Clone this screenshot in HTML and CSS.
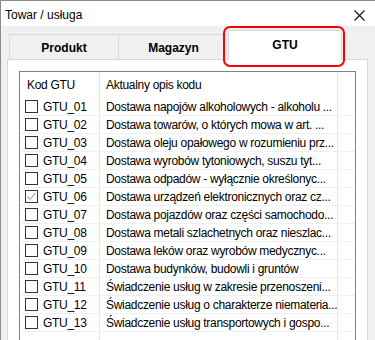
FILE: index.html
```
<!DOCTYPE html>
<html lang="pl">
<head>
    <meta charset="UTF-8">
    <title>Towar / usługa</title>
    <link rel="stylesheet" href="styles.css">
</head>
<body>
    <div class="window">
        <div class="titlebar">
            <span class="title">Towar / usługa</span>
            <svg class="close" width="11" height="11" viewBox="0 0 11 11">
                <path d="M0.5 0.5 L10.5 10.5 M10.5 0.5 L0.5 10.5" stroke="#111" stroke-width="1.1" fill="none"/>
            </svg>
        </div>

        <div class="dialog">
            <div class="tabs">
                <div class="tab">Produkt</div>
                <div class="tab second">Magazyn</div>
                <div class="tab active">GTU</div>
            </div>

            <div class="panel">
                <div class="listbox">
                    <div class="row head">
                        <div class="cell code">Kod GTU</div>
                        <div class="cell desc">Aktualny opis kodu</div>
                        <div class="cell rest"></div>
                    </div>
                    <div class="row">
                        <div class="cell code"><span class="check"></span>GTU_01</div>
                        <div class="cell desc">Dostawa napojów alkoholowych - alkoholu ...</div>
                        <div class="cell rest"></div>
                    </div>
                    <div class="row">
                        <div class="cell code"><span class="check"></span>GTU_02</div>
                        <div class="cell desc">Dostawa towarów, o których mowa w art. ...</div>
                        <div class="cell rest"></div>
                    </div>
                    <div class="row">
                        <div class="cell code"><span class="check"></span>GTU_03</div>
                        <div class="cell desc">Dostawa oleju opałowego w rozumieniu prz...</div>
                        <div class="cell rest"></div>
                    </div>
                    <div class="row">
                        <div class="cell code"><span class="check"></span>GTU_04</div>
                        <div class="cell desc">Dostawa wyrobów tytoniowych, suszu tyt...</div>
                        <div class="cell rest"></div>
                    </div>
                    <div class="row">
                        <div class="cell code"><span class="check"></span>GTU_05</div>
                        <div class="cell desc">Dostawa odpadów - wyłącznie określonyc...</div>
                        <div class="cell rest"></div>
                    </div>
                    <div class="row">
                        <div class="cell code">
                            <span class="check">
                                <svg width="11" height="11" viewBox="0 0 11 11">
                                    <path d="M1.5 5.5 L4 8.5 L9.5 2" stroke="#8a8a8a" stroke-width="1" fill="none"/>
                                </svg>
                            </span>GTU_06
                        </div>
                        <div class="cell desc">Dostawa urządzeń elektronicznych oraz cz...</div>
                        <div class="cell rest"></div>
                    </div>
                    <div class="row">
                        <div class="cell code"><span class="check"></span>GTU_07</div>
                        <div class="cell desc">Dostawa pojazdów oraz części samochodo...</div>
                        <div class="cell rest"></div>
                    </div>
                    <div class="row">
                        <div class="cell code"><span class="check"></span>GTU_08</div>
                        <div class="cell desc">Dostawa metali szlachetnych oraz nieszlac...</div>
                        <div class="cell rest"></div>
                    </div>
                    <div class="row">
                        <div class="cell code"><span class="check"></span>GTU_09</div>
                        <div class="cell desc">Dostawa leków oraz wyrobów medycznyc...</div>
                        <div class="cell rest"></div>
                    </div>
                    <div class="row">
                        <div class="cell code"><span class="check"></span>GTU_10</div>
                        <div class="cell desc">Dostawa budynków, budowli i gruntów</div>
                        <div class="cell rest"></div>
                    </div>
                    <div class="row">
                        <div class="cell code"><span class="check"></span>GTU_11</div>
                        <div class="cell desc">Świadczenie usług w zakresie przenoszeni...</div>
                        <div class="cell rest"></div>
                    </div>
                    <div class="row">
                        <div class="cell code"><span class="check"></span>GTU_12</div>
                        <div class="cell desc">Świadczenie usług o charakterze niemateria...</div>
                        <div class="cell rest"></div>
                    </div>
                    <div class="row">
                        <div class="cell code"><span class="check"></span>GTU_13</div>
                        <div class="cell desc">Świadczenie usług transportowych i gospo...</div>
                        <div class="cell rest"></div>
                    </div>
                    <div class="row filler">
                        <div class="cell code"></div>
                        <div class="cell desc"></div>
                        <div class="cell rest"></div>
                    </div>
                </div>
            </div>

            <!-- highlight drawn over the GTU tab -->
            <div class="marker"></div>
        </div>
    </div>
</body>
</html>
```

FILE: styles.css
```
body {
    margin: 0;
    font-family: "Liberation Sans", Arial, sans-serif;
    font-size: 12px;
    color: #000;
    background: #f0f0f0;
}
.window {
    width: 375px;
    height: 340px;
    overflow: hidden;
    border-top: 1px solid #8c8c8c;
    border-left: 1px solid #8c8c8c;
    box-sizing: border-box;
    background: #f0f0f0;
}
.titlebar {
    height: 25px;
    background: #fff;
    display: flex;
    align-items: center;
    justify-content: space-between;
    padding: 0 10px 0 4px;
}
.title {
    font-size: 12px;
    padding-top: 2px;
}
.close {
    display: block;
    margin-top: 3px;
}
.dialog {
    position: relative;
    padding: 4px 0 0 6px;
}
.tabs {
    display: flex;
    align-items: flex-end;
    height: 29px;
    padding-left: 2px;
}
.tab {
    box-sizing: border-box;
    width: 110px;
    height: 25px;
    border: 1px solid #d9d9d9;
    border-bottom: none;
    background: #f0f0f0;
    font-weight: bold;
    display: flex;
    align-items: center;
    justify-content: center;
    padding-top: 1px;
}
.tab.second {
    border-left: none;
}
.tab.active {
    position: relative;
    z-index: 1;
    width: 114px;
    height: 30px;
    margin-left: -1px;
    margin-bottom: -1px;
    background: #fff;
    padding-bottom: 2px;
}
.panel {
    box-sizing: border-box;
    width: 361px;
    height: 300px;
    border: 1px solid #d9d9d9;
    background: #fff;
    padding: 11px 11px 0 11px;
}
.listbox {
    border: 1px solid #828282;
    background: #fff;
    height: 280px;
    letter-spacing: -0.3px;
}
.row {
    display: grid;
    grid-template-columns: 80px 238px 1fr;
    height: 18px;
    border-bottom: 1px solid #f0f0f0;
    box-sizing: border-box;
}
.row.head {
    height: 26px;
    border-bottom: none;
}
.row.filler {
    height: 40px;
    border-bottom: none;
}
.cell {
    border-right: 1px solid #e5e5e5;
    display: flex;
    align-items: center;
    white-space: nowrap;
    overflow: hidden;
}
.cell.rest {
    border-right: none;
}
.code {
    padding-left: 5px;
}
.head .code {
    padding-left: 7px;
}
.desc {
    padding-left: 6px;
}
.check {
    box-sizing: border-box;
    width: 13px;
    height: 13px;
    border: 1px solid #333;
    background: #fff;
    margin-right: 5px;
    flex: none;
    display: flex;
    align-items: center;
    justify-content: center;
}
.check svg {
    display: block;
}
.marker {
    position: absolute;
    left: 222px;
    top: 0;
    width: 122px;
    height: 41px;
    border: 2px solid #f00;
    border-radius: 7px;
    box-sizing: border-box;
}
```
